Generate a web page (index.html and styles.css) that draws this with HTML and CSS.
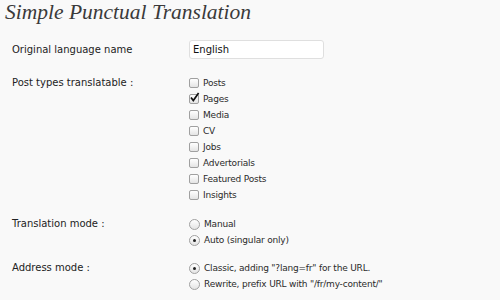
FILE: index.html
```html
<!DOCTYPE html>
<html lang="en">
<head>
  <meta charset="UTF-8">
  <title>Simple Punctual Translation</title>
  <link rel="stylesheet" href="styles.css">
</head>
<body>
<div class="wrap">
  <h2>Simple Punctual Translation</h2>

  <div class="settings">
    <div class="row row-lang">
      <label class="field-label">Original language name</label>
      <div><input type="text" class="text-input" value="English"></div>
    </div>

    <div class="row">
      <div class="field-label list-label">Post types translatable :</div>
      <div class="options">
        <div class="option"><span class="box"></span>Posts</div>
        <div class="option"><span class="box"><svg width="11" height="11" viewBox="0 0 11 11"><path d="M2 5.5 L4.3 8.6 L9.6 1" fill="none" stroke="#111" stroke-width="1.7"/></svg></span>Pages</div>
        <div class="option"><span class="box"></span>Media</div>
        <div class="option"><span class="box"></span>CV</div>
        <div class="option"><span class="box"></span>Jobs</div>
        <div class="option"><span class="box"></span>Advertorials</div>
        <div class="option"><span class="box"></span>Featured Posts</div>
        <div class="option"><span class="box"></span>Insights</div>
      </div>
    </div>

    <div class="row row-mode">
      <div class="field-label list-label">Translation mode :</div>
      <div class="options">
        <div class="option"><span class="radio"></span>Manual</div>
        <div class="option"><span class="radio checked"></span>Auto (singular only)</div>
      </div>
    </div>

    <div class="row row-address">
      <div class="field-label list-label">Address mode :</div>
      <div class="options">
        <div class="option"><span class="radio checked"></span>Classic, adding "?lang=fr" for the URL.</div>
        <div class="option"><span class="radio"></span>Rewrite, prefix URL with "/fr/my-content/"</div>
      </div>
    </div>
  </div>
</div>
</body>
</html>
```

FILE: styles.css
```css
body {
  margin: 0;
  padding: 0;
  background-color: #f9f9f9;
  font-family: "DejaVu Sans", Verdana, sans-serif;
  font-size: 10px;
  color: #333;
}

.wrap {
  padding-left: 5px;
}

h2 {
  margin: 0;
  font-family: "Liberation Serif", Georgia, serif;
  font-style: italic;
  font-weight: normal;
  font-size: 21.5px;
  line-height: 25px;
  color: #3a3a3a;
}

.settings {
  padding-left: 7px;
}

.row {
  display: grid;
  grid-template-columns: 177px 1fr;
}

.row-lang {
  margin-top: 15px;
  margin-bottom: 15px;
}

.row-mode {
  margin-top: 13px;
}

.row-address {
  margin-top: 12px;
}

.field-label {
  color: #222;
  line-height: 20px;
}

.list-label {
  line-height: 16px;
}

.text-input {
  box-sizing: border-box;
  width: 135px;
  height: 19px;
  margin: 0;
  padding: 0 3px;
  border: 1px solid #dfdfdf;
  border-radius: 3px;
  background-color: white;
  font-family: inherit;
  font-size: 10px;
  color: #111;
}

.option {
  display: flex;
  align-items: center;
  height: 16px;
  font-size: 9px;
  letter-spacing: -0.2px;
  color: #2a2a2a;
}

.box {
  box-sizing: border-box;
  width: 10px;
  height: 10px;
  margin-right: 4px;
  border: 1px solid #a0a0a0;
  border-radius: 2px;
  background: linear-gradient(#fff, #e4e4e4);
  position: relative;
}

.box svg {
  position: absolute;
  left: -1px;
  top: -3px;
}

.radio {
  box-sizing: border-box;
  width: 11px;
  height: 11px;
  margin-right: 4px;
  border: 1px solid #a0a0a0;
  border-radius: 50%;
  background: linear-gradient(#fff, #e4e4e4);
  display: flex;
  align-items: center;
  justify-content: center;
}

.radio.checked::after {
  content: "";
  width: 3px;
  height: 3px;
  border-radius: 50%;
  background-color: #222;
}
```
